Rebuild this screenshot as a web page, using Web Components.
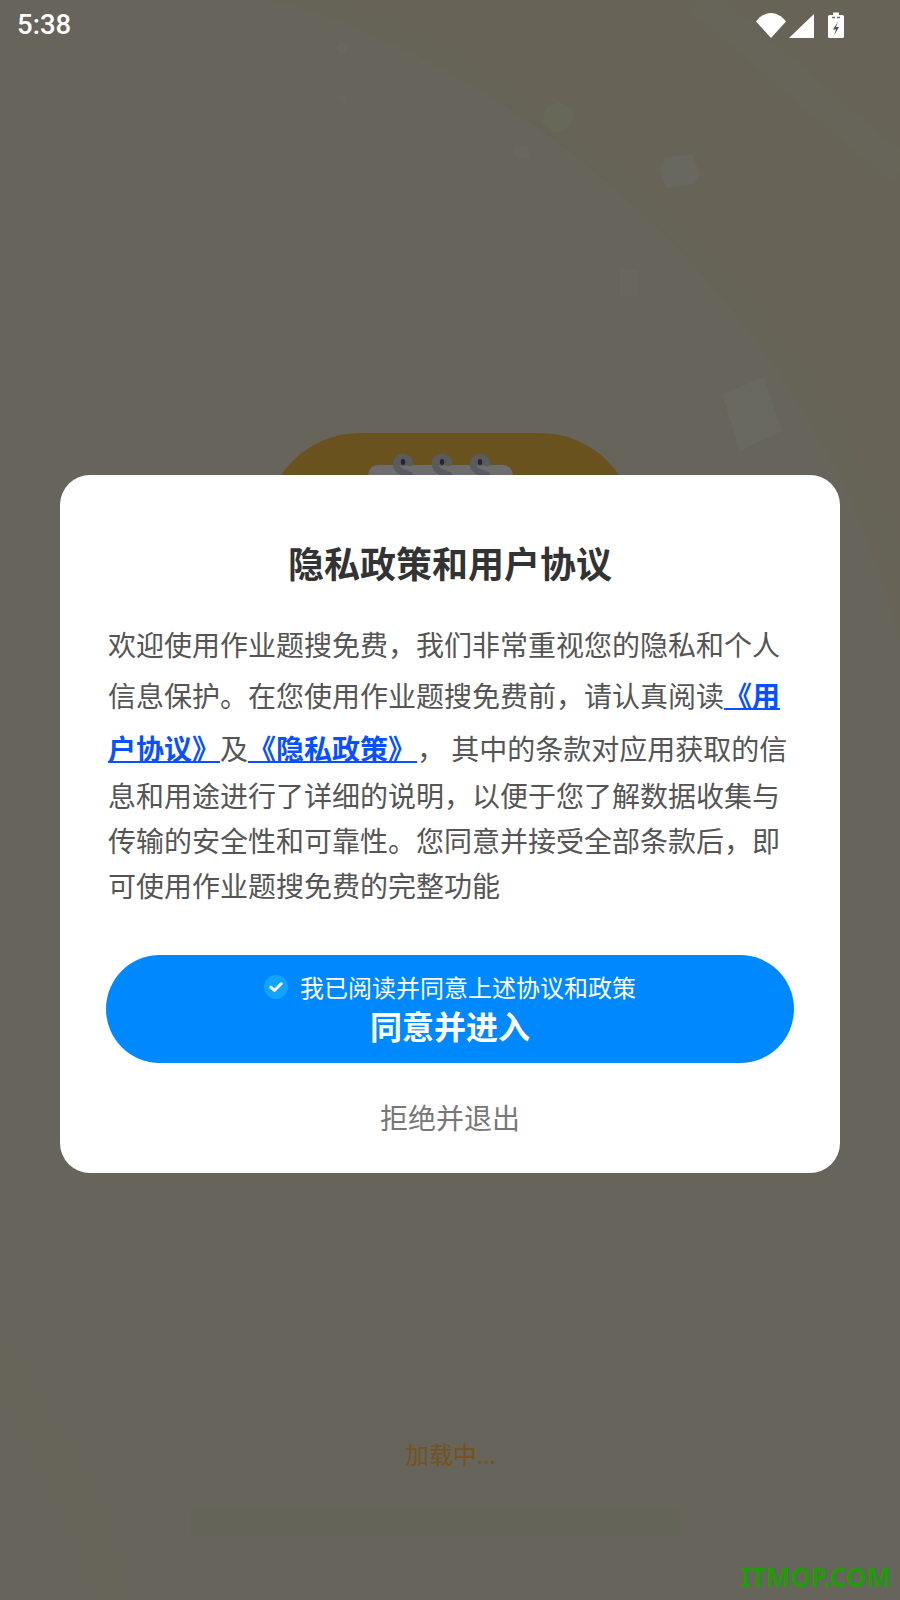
<!DOCTYPE html>
<html lang="zh-CN">
<head>
<meta charset="utf-8">
<title>隐私政策和用户协议</title>
<style>
html,body{margin:0;padding:0;background:#666459;}
body{width:900px;height:1600px;overflow:hidden;font-family:"Noto Sans CJK SC","Noto Sans",sans-serif;}
</style>
</head>
<body>
<splash-screen>
  <status-bar time="5:38"></status-bar>
  <consent-dialog slot="dialog" heading="隐私政策和用户协议">
    <policy-line h="45">欢迎使用作业题搜免费，我们非常重视您的隐私和个人</policy-line>
    <policy-line h="57">信息保护。在您使用作业题搜免费前，请认真阅读<policy-link>《用</policy-link></policy-line>
    <policy-line h="49"><policy-link>户协议》</policy-link>及<policy-link>《隐私政策》 </policy-link>， 其中的条款对应用获取的信</policy-line>
    <policy-line h="45">息和用途进行了详细的说明，以便于您了解数据收集与</policy-line>
    <policy-line h="45">传输的安全性和可靠性。您同意并接受全部条款后，即</policy-line>
    <policy-line h="44">可使用作业题搜免费的完整功能</policy-line>
    <agree-button slot="actions" note="我已阅读并同意上述协议和政策" label="同意并进入"></agree-button>
  </consent-dialog>
</splash-screen>
<script>
function def(name, css, html){
  customElements.define(name, class extends HTMLElement{
    constructor(){super();this.attachShadow({mode:'open'});}
    connectedCallback(){
      this.shadowRoot.innerHTML='<style>'+css+'</style>'+(typeof html==='function'?html(this):html);
    }
  });
}
const ring=x=>`<path d="M${x+7} 463A7 7 0 1 0 ${x-7} 465C${x-6} 471 ${x} 472 ${x+7} 475" stroke="#5a5b60" stroke-width="6.500" stroke-linecap="round" fill="none"/>
  <circle cx="${x}" cy="462" r="4" fill="#5a5b60"/>
  <ellipse cx="${x}" cy="462" rx="2.200" ry="3" fill="#26262a"/>`;
def('splash-screen',`
  :host{display:block;position:relative;width:900px;height:1600px;overflow:hidden;background:#666459;}
  .art{position:absolute;inset:0;}
  .layer{position:relative;display:flex;flex-direction:column;height:100%;}
  .dialog-wrap{position:absolute;left:0;right:0;top:475px;display:flex;justify-content:center;}
  .loading{position:absolute;left:0;right:0;top:1436px;text-align:center;font-size:24px;line-height:36px;color:#75531e;letter-spacing:-.2px;padding-left:1px;}
  .mark{position:absolute;right:9px;top:1560px;font:700 26px/34px "Noto Sans",sans-serif;color:#239a0c;}
`,`
  <svg class="art" width="900" height="1600" viewBox="0 0 900 1600" fill="none">
    <rect width="900" height="1600" fill="#66645b"/>
    <path d="M270 0C560 70 830 350 900 640V0Z" fill="#676457"/>
    <path d="M300 0C560 80 800 320 900 560" stroke="#676456" stroke-width="14" opacity=".4"/>
    <path d="M700 0L900 170" stroke="#68655e" stroke-width="30" opacity=".4"/>
    <path d="M546 108l14-6 14 8-4 17-16 6-12-10z" fill="#686859"/>
    <path d="M516 144l12 1 2 12-12 3-5-9z" fill="#68675f"/>
    <path d="M340 40l8 4-1 8-7 4-4-9zM340 95l6 1 1 6-6 2-3-5z" fill="#68675f"/>
    <path d="M664 158l28-4 8 20-6 10-28 4-6-18z" fill="#696860"/>
    <path d="M620 268l18 2-1 26-17 0z" fill="#68675f"/>
    <path d="M722 394l42-17 18 54-42 20z" fill="#696861"/>
    <path d="M0 1350C50 1450 100 1520 110 1600" stroke="#67655a" stroke-width="30" opacity=".5"/>
    <path d="M190 1510h490v26H190z" fill="#656458"/>
    <rect x="265" y="433" width="370" height="220" rx="95" fill="#6a521f"/>
    <rect x="368" y="465" width="145" height="120" rx="10" fill="#6e6e6e"/>
    ${ring(403)}${ring(442)}${ring(480)}
  </svg>
  <div class="layer"><slot></slot></div>
  <div class="dialog-wrap"><slot name="dialog"></slot></div>
  <div class="loading">加载中...</div>
  <div class="mark">ITMOP.COM</div>
`);
def('status-bar',`
  :host{display:block;height:50px;color:#fff;}
  .bar{display:flex;align-items:center;justify-content:space-between;height:50px;padding:0 56px 0 17px;}
  .time{font:500 27.500px/50px Roboto,sans-serif;}
  .icons{display:flex;align-items:flex-start;}
  svg{display:block;}
`,el=>`<div class="bar"><span class="time">${el.getAttribute('time')}</span>
  <div class="icons"><svg width="88" height="30" viewBox="756 8 88 30">
    <path d="M756 19.500C765 8 777 8 786 19.500L771 36Z" fill="#fff"/>
    <path d="M814 12V36H789Z" fill="#fff"/>
    <path d="M833 10.500h6v2.500h3.500a1.500 1.500 0 0 1 1.500 1.500V34.500a1.500 1.500 0 0 1-1.500 1.500h-13a1.500 1.500 0 0 1-1.500-1.500V14.500a1.500 1.500 0 0 1 1.500-1.500H833Z" fill="#fff"/>
    <path d="M832 15.500h3M837 15.500h3" stroke="#6f6d66" stroke-width="1.500"/>
    <path d="M838 19.500l-5 8h3l-2 6 5-8.500h-3z" fill="#55534c"/>
  </svg></div></div>`);
def('consent-dialog',`
  :host{display:block;width:780px;height:698px;box-sizing:border-box;background:#fff;border-radius:30px;padding:58px 54px 0 48px;}
  h1{margin:0 0 0 6px;font-size:36px;line-height:58px;font-weight:700;color:#333;text-align:center;height:58px;}
  .body{margin-top:31px;color:#555;font-size:28px;}
  .actions{margin:48px -8px 0 -2px;}
  .reject{margin:31px 0 0 6px;text-align:center;font-size:28px;line-height:46px;color:#777;}
`,el=>`<h1>${el.getAttribute('heading')}</h1><div class="body"><slot></slot></div>
  <div class="actions"><slot name="actions"></slot></div><div class="reject">拒绝并退出</div>`);
def('policy-line',`
  :host{display:block;white-space:pre;font-size:28px;}
  div{display:flex;align-items:center;}
`,el=>`<div style="height:${el.getAttribute('h')}px;line-height:${el.getAttribute('h')}px"><span><slot></slot></span></div>`);
def('policy-link',`
  :host{display:inline;color:#0a50ff;font-weight:700;word-spacing:-5.300px;text-decoration:underline;text-decoration-thickness:1.500px;text-underline-offset:1px;}
`,`<slot></slot>`);
def('agree-button',`
  :host{display:block;height:108px;border-radius:54px;background:#0088ff;color:#fff;}
  .wrap{display:flex;flex-direction:column;align-items:center;padding-top:14px;}
  .note{display:flex;align-items:center;gap:12px;font-size:24px;line-height:36px;height:36px;}
  .label{font-size:32px;font-weight:700;line-height:44px;margin-top:-2px;}
  svg{display:block;margin-top:-1px;}
`,el=>`<div class="wrap"><div class="note"><svg width="24" height="24" viewBox="0 0 24 24"><circle cx="12" cy="12" r="12" fill="#10a4ff"/><path d="M6.800 12.200l3.600 3.300 6.800-6.700" fill="none" stroke="#fff" stroke-width="3" stroke-linecap="round" stroke-linejoin="round"/></svg><span>${el.getAttribute('note')}</span></div><div class="label">${el.getAttribute('label')}</div></div>`);
</script>
</body>
</html>
